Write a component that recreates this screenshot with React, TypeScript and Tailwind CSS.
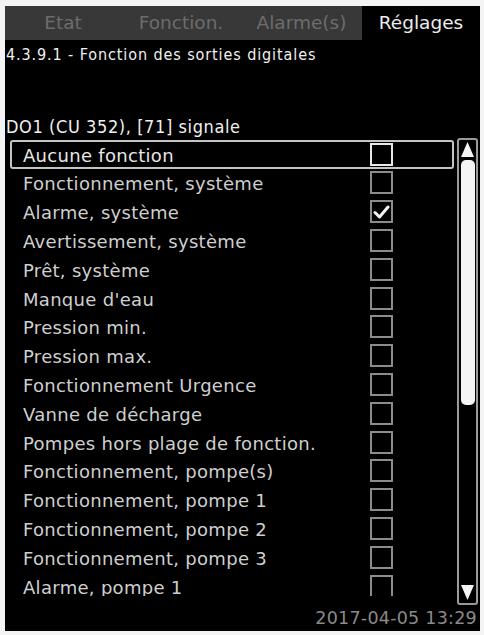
import React from "react";

const rows: { label: string; checked?: boolean }[] = [
  { label: "Aucune fonction" },
  { label: "Fonctionnement, système" },
  { label: "Alarme, système", checked: true },
  { label: "Avertissement, système" },
  { label: "Prêt, système" },
  { label: "Manque d'eau" },
  { label: "Pression min." },
  { label: "Pression max." },
  { label: "Fonctionnement Urgence" },
  { label: "Vanne de décharge" },
  { label: "Pompes hors plage de fonction." },
  { label: "Fonctionnement, pompe(s)" },
  { label: "Fonctionnement, pompe 1" },
  { label: "Fonctionnement, pompe 2" },
  { label: "Fonctionnement, pompe 3" },
  { label: "Alarme, pompe 1" },
];

const font = { fontFamily: "'DejaVu Sans', 'Liberation Sans', sans-serif" };
const condensed = { fontFamily: "'DejaVu Sans Condensed', 'DejaVu Sans', sans-serif" };

export default function App() {
  return (
    <div className="w-[484px] h-[635px] bg-[#f4f4f4] pt-[6px] pl-[5px]">
      <div className="w-[475px] h-[625px] bg-black flex flex-col relative overflow-hidden">
        {/* Tabs */}
        <div className="h-[34px] flex bg-[#383838] shrink-0" style={font}>
          <div className="w-[116px] flex items-center justify-center text-[18.5px] text-[#6c6c6c]">Etat</div>
          <div className="w-[120px] flex items-center justify-center text-[18.5px] text-[#6c6c6c]">Fonction.</div>
          <div className="w-[121px] flex items-center justify-center text-[18.5px] text-[#6c6c6c]">Alarme(s)</div>
          <div className="flex-1 flex items-center justify-center bg-black text-[18.5px] text-[#ececec]">Réglages</div>
        </div>
        {/* Title */}
        <div className="h-[30px] flex items-center pl-[1px] text-[16px] tracking-[0.9px] text-[#f0f0f0] font-stretch-condensed" style={condensed}>
          4.3.9.1 - Fonction des sorties digitales
        </div>
        <div className="h-[46px]" />
        <div className="h-[22px] flex items-center pl-[1px] text-[18px] tracking-[0.6px] text-[#f0f0f0] font-stretch-condensed" style={condensed}>
          DO1 (CU 352), [71] signale
        </div>
        {/* List + scrollbar */}
        <div className="flex mt-[2px]">
          <div className="w-[450px] h-[456px] overflow-hidden pl-[5px]" style={font}>
            {rows.map((r, i) => (
              <div
                key={i}
                className={
                  "h-[28.8px] w-[444px] flex items-center pl-[13px] " +
                  (i === 0 ? "border-2 border-[#c4c4c4] rounded-[3px] text-[#e6e6e6]" : "text-[#cfcfcf]")
                }
              >
                <span className={"text-[18px] tracking-[0.3px] flex-1 pt-[2px] " + (i === 0 ? "-ml-[2px]" : "")}>{r.label}</span>
                <div
                  className={
                    "w-[23px] h-[23px] border-2 flex items-center justify-center " +
                    (i === 0 ? "border-[#e8e8e8] mr-[59px]" : "border-[#8c8c8c] mr-[61px]")
                  }
                >
                  {r.checked && (
                    <svg width="17" height="14" viewBox="0 0 17 14">
                      <path d="M2 7.5 L6.5 12 L15 2" fill="none" stroke="#f2f2f2" strokeWidth="3" strokeLinecap="round" strokeLinejoin="round" />
                    </svg>
                  )}
                </div>
              </div>
            ))}
          </div>
          <div className="ml-[2px] -mt-[2px] w-[21px] h-[467px] border-2 border-[#9a9a9a] rounded-[3px] flex flex-col items-center pt-[1px]">
            <svg width="15" height="17" viewBox="0 0 15 17">
              <path d="M7.5 1 L14 16 L1 16 Z" fill="#f4f4f4" />
            </svg>
            <div className="w-[14px] h-[245px] bg-[#f4f4f4] rounded-[5px] mt-[2px]" />
            <div className="flex-1" />
            <svg width="15" height="17" viewBox="0 0 15 17" className="mb-[2px]">
              <path d="M1 1 L14 1 L7.5 16 Z" fill="#f4f4f4" />
            </svg>
          </div>
        </div>
        <div className="flex-1 flex items-center justify-end pr-[3px] text-[17.5px] tracking-[0.25px] text-[#8a8a8a]" style={font}>
          2017-04-05 13:29
        </div>
      </div>
    </div>
  );
}
